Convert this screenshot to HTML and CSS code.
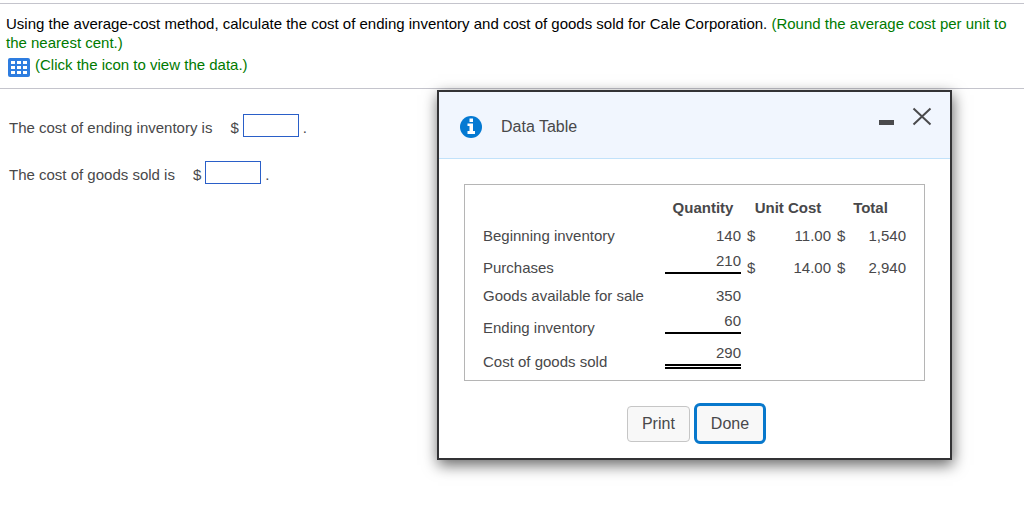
FILE: index.html
```html
<!DOCTYPE html>
<html lang="en">
<head>
<meta charset="utf-8">
<meta name="viewport" content="width=device-width, initial-scale=1">
<title>Average-cost method</title>
<link rel="stylesheet" href="styles.css">
</head>
<body>
<main class="page">
  <section class="question">
    <p class="prompt">Using the average-cost method, calculate the cost of ending inventory and cost of goods sold for Cale Corporation. <span class="hint">(Round the average cost per unit to the nearest cent.)</span></p>
    <button class="data-link hint" type="button">
      <svg class="grid-icon" viewBox="0 0 22 19" aria-hidden="true">
        <rect width="22" height="19" rx="2" fill="#2e7de0"/>
        <path fill="#fff" d="M3 3h4v3H3zM9 3h4v3H9zM15 3h4v3h-4zM3 8h4v3H3zM9 8h4v3H9zM15 8h4v3h-4zM3 13h4v3H3zM9 13h4v3H9zM15 13h4v3h-4z"/>
      </svg>
      <span>(Click the icon to view the data.)</span>
    </button>
  </section>
  <form class="answers">
    <div class="answer">
      <label class="answer-label" for="ending">The cost of ending inventory is</label>
      <span class="currency">$</span>
      <input class="amount" id="ending" type="text">
      <span class="period">.</span>
    </div>
    <div class="answer">
      <label class="answer-label" for="sold">The cost of goods sold is</label>
      <span class="currency">$</span>
      <input class="amount" id="sold" type="text">
      <span class="period">.</span>
    </div>
  </form>
</main>

<div class="dialog" role="dialog" aria-labelledby="dialog-title">
  <header class="dialog-header">
    <svg class="info-icon" viewBox="0 0 22 22" aria-hidden="true">
      <circle cx="11" cy="11" r="11" fill="#0479d2"/>
      <path fill="#fff" d="M9.500 2.500h3.500V6H9.500zM7.500 7.500H13V15h2v3H7.500v-3h2v-5h-2z"/>
    </svg>
    <h1 class="dialog-title" id="dialog-title">Data Table</h1>
    <div class="window-controls">
      <button class="control" type="button" aria-label="Minimize">
        <svg class="control-icon" viewBox="0 0 20 20" aria-hidden="true"><path fill="#4a4a4c" d="M2 14h15v5H2z"/></svg>
      </button>
      <button class="control" type="button" aria-label="Close">
        <svg class="control-icon" viewBox="0 0 20 20" aria-hidden="true"><path fill="none" stroke="#4a4a4c" stroke-width="2" d="M1.500 2.500 18.500 18.500M18.500 2.500 1.500 18.500"/></svg>
      </button>
    </div>
  </header>
  <div class="dialog-body">
    <div class="table-box">
      <table class="data">
        <colgroup>
          <col class="col-label"><col class="col-quantity"><col class="col-sign"><col class="col-cost"><col class="col-sign"><col class="col-total">
        </colgroup>
        <thead>
          <tr><td></td><th scope="col">Quantity</th><th class="wide" scope="colgroup" colspan="2">Unit Cost</th><th class="wide" scope="colgroup" colspan="2">Total</th></tr>
        </thead>
        <tbody>
          <tr><th scope="row">Beginning inventory</th><td class="num">140</td><td class="sign">$</td><td class="num">11.00</td><td class="sign">$</td><td class="num">1,540</td></tr>
          <tr class="tall"><th scope="row">Purchases</th><td class="ruled"><span class="rule">210</span></td><td class="sign">$</td><td class="num">14.00</td><td class="sign">$</td><td class="num">2,940</td></tr>
          <tr><th scope="row">Goods available for sale</th><td class="num">350</td><td></td><td></td><td></td><td></td></tr>
          <tr class="tall"><th scope="row">Ending inventory</th><td class="ruled"><span class="rule">60</span></td><td></td><td></td><td></td><td></td></tr>
          <tr class="last"><th scope="row">Cost of goods sold</th><td class="ruled"><span class="rule rule-double">290</span></td><td></td><td></td><td></td><td></td></tr>
        </tbody>
      </table>
    </div>
    <div class="actions">
      <button class="button" type="button">Print</button>
      <button class="button button-primary" type="button">Done</button>
    </div>
  </div>
</div>
</body>
</html>
```

FILE: styles.css
```css
* { box-sizing: border-box; }

body {
  margin: 0;
  background: #fff;
  color: #48484a;
  font: 15px/18px "Liberation Sans", Arial, sans-serif;
}

button, input { font: inherit; color: inherit; }

.page { padding-top: 3px; }

.question {
  padding: 10px 6px 11px;
  border: solid #c4c4cc;
  border-width: 1px 0;
  color: #000;
}

.prompt { margin: 0; line-height: 19px; }
.hint { color: #007a00; }

.data-link {
  display: flex;
  align-items: flex-start;
  gap: 5px;
  margin-top: 4px;
  padding: 0 2px;
  border: 0;
  background: none;
  color: #007a00;
}

.grid-icon { width: 22px; height: 19px; margin-top: 2px; }

.answers {
  display: flex;
  flex-direction: column;
  gap: 24px;
  padding: 25px 9px;
}

.answer { display: flex; align-items: center; }
.answer-label { margin-right: 18px; padding-top: 4px; }
.currency { margin-right: 4px; padding-top: 4px; }

.amount {
  width: 56px;
  height: 23px;
  margin-right: 4px;
  padding: 0 4px;
  border: 1px solid #2a5fc8;
  background: #fff;
}

.period { padding-top: 4px; }

.dialog {
  position: absolute;
  top: 90px;
  left: 437px;
  width: 515px;
  border: 2px solid #333335;
  background: #fff;
  box-shadow: 1px 5px 14px rgba(0, 0, 0, 0.6);
}

.dialog-header {
  display: flex;
  align-items: center;
  padding: 14px 18px 20px 21px;
  border-bottom: 1px solid #c2e2fa;
  background: #f1f6fe;
}

.info-icon { width: 22px; height: 22px; margin-top: 10px; }

.dialog-title {
  flex: 1;
  margin: 10px 0 0 19px;
  font-size: 16px;
  font-weight: 400;
}

.window-controls { display: flex; align-self: flex-start; gap: 15px; }
.control { padding: 0; border: 0; background: none; }
.control-icon { display: block; width: 20px; height: 20px; }

.dialog-body { padding: 25px; }

.table-box {
  padding: 14px 18px 9px;
  border: 1px solid #b5b5b5;
}

.data {
  width: 100%;
  table-layout: fixed;
  border-collapse: collapse;
}

.col-quantity { width: 76px; }
.col-sign { width: 16px; }
.col-cost { width: 74px; }
.col-total { width: 59px; }

.data th, .data td { padding: 0; vertical-align: bottom; }
.data tbody tr { height: 28px; }
.data tbody .tall { height: 32px; }
.data tbody .last { height: 34px; }
.data tbody th { font-weight: 400; text-align: left; }
.data thead th { font-weight: 700; }
.data thead .wide { padding-left: 4px; }
.data .num { text-align: right; }
.data .sign { padding-left: 6px; }
.data .ruled { padding-top: 7px; vertical-align: top; text-align: right; }

.rule { display: block; padding-bottom: 2px; border-bottom: 2px solid #000; }
.rule-double { border-bottom: 5px double #000; }

.actions {
  display: flex;
  justify-content: center;
  align-items: center;
  gap: 4px;
  padding: 22px 0 0 4px;
  margin-bottom: -11px;
}

.button {
  height: 36px;
  padding: 0 14px;
  border: 1px solid #c6c6c6;
  border-radius: 4px;
  background: #f8f8f8;
  font-size: 16px;
}

.button-primary {
  height: 41px;
  border: 3px solid #0878cc;
  border-radius: 6px;
}
```
